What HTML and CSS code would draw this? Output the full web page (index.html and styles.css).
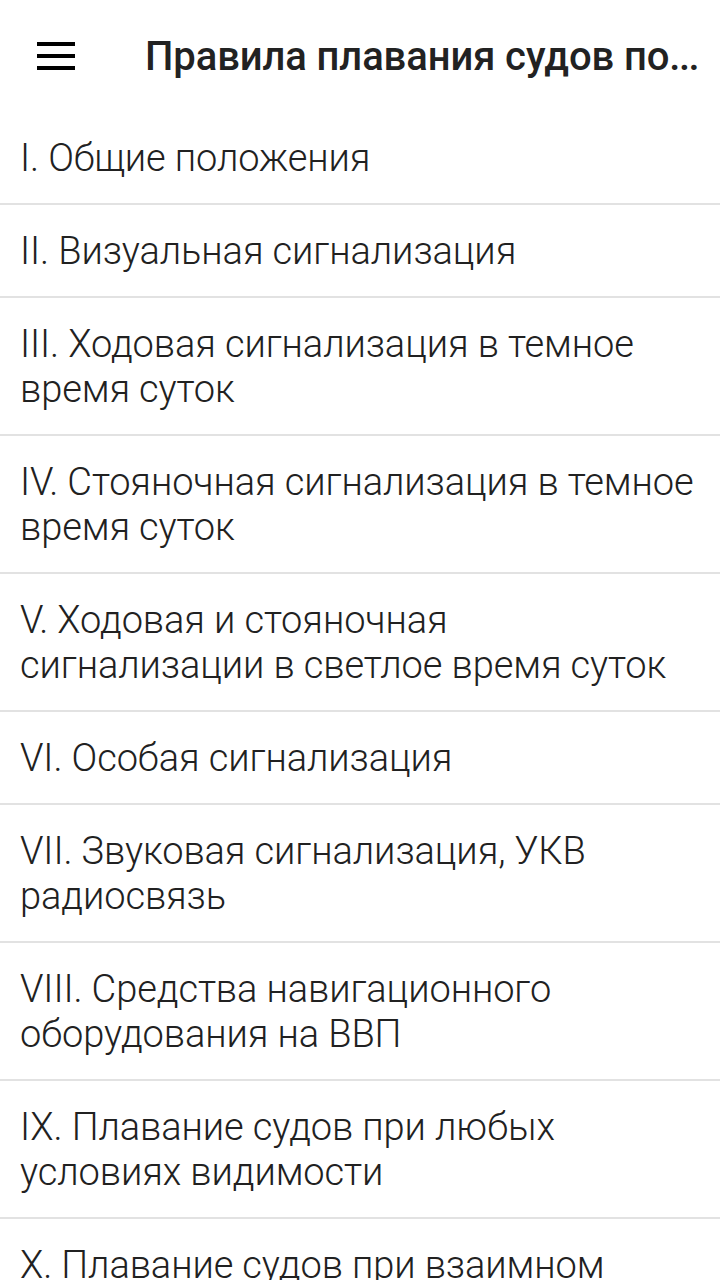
FILE: index.html
```html
<!DOCTYPE html>
<html lang="ru">
<head>
    <meta charset="UTF-8">
    <meta name="viewport" content="width=device-width, initial-scale=1.0">
    <title>Правила плавания судов по внутренним водным путям</title>
    <link rel="stylesheet" href="styles.css">
</head>
<body>
    <header class="toolbar">
        <button class="menu-btn" aria-label="Меню">
            <svg width="38" height="28" viewBox="0 0 38 28">
                <rect x="0" y="0" width="38" height="4"/>
                <rect x="0" y="12" width="38" height="4"/>
                <rect x="0" y="24" width="38" height="4"/>
            </svg>
        </button>
        <div class="title" title="Правила плавания судов по внутренним водным путям">Правила плавания судов по<span class="dots">...</span></div>
    </header>

    <ul class="chapters">
        <li>I. Общие положения</li>
        <li>II. Визуальная сигнализация</li>
        <li>III. Ходовая сигнализация в темное время суток</li>
        <li>IV. Стояночная сигнализация в темное время суток</li>
        <li>V. Ходовая и стояночная сигнализации в светлое время суток</li>
        <li>VI. Особая сигнализация</li>
        <li>VII. Звуковая сигнализация, УКВ радиосвязь</li>
        <li>VIII. Средства навигационного оборудования на ВВП</li>
        <li>IX. Плавание судов при любых условиях видимости</li>
        <li>X. Плавание судов при взаимном расхождении и обгоне</li>
        <li>XI. Плавание судов в условиях ограниченной видимости</li>
    </ul>
</body>
</html>
```

FILE: styles.css
```css
:root {
    --text-color: #212121;
    --divider: #e2e2e2;
}

body {
    font-family: 'Roboto', 'Liberation Sans', sans-serif;
    background-color: white;
    margin: 0;
    padding: 0;
    color: var(--text-color);
    overflow: hidden;
}

.toolbar {
    height: 112px;
    display: flex;
    align-items: center;
    background-color: white;
}

.menu-btn {
    width: 112px;
    height: 112px;
    padding: 0 0 0 37px;
    border: none;
    background: none;
    display: flex;
    align-items: center;
    flex-shrink: 0;
    margin-right: 33px;
}

.menu-btn svg {
    fill: #000;
}

.title {
    flex: 1;
    min-width: 0;
    font-size: 40px;
    font-weight: 500;
    letter-spacing: -0.1px;
    white-space: nowrap;
    overflow: hidden;
    padding-right: 10px;
    color: #222;
}

.dots {
    letter-spacing: -1.5px;
}

.chapters {
    list-style: none;
    margin: 0;
    padding: 0;
}

.chapters li {
    padding: 24px 20px 22px;
    font-size: 38px;
    font-weight: 300;
    letter-spacing: -0.1px;
    line-height: 45px;
    border-bottom: 2px solid var(--divider);
}
```
